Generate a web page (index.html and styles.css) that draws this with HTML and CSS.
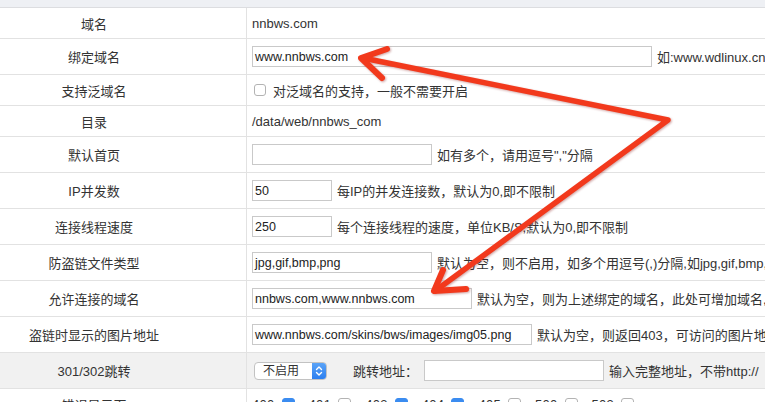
FILE: index.html
```html
<!DOCTYPE html>
<html lang="zh">
<head>
<meta charset="utf-8">
<title>站点设置</title>
<link rel="stylesheet" href="styles.css">
</head>
<body>
<div class="page">
  <div class="head"></div>
  <div class="form">
    <div class="row h30"><div class="lab">域名</div><div class="val">nnbws.com</div></div>
    <div class="row"><div class="lab">绑定域名</div><div class="val"><span class="inp w400">www.nnbws.com</span><span class="tip">如:www.wdlinux.cn,wdlinux.cn</span></div></div>
    <div class="row h30"><div class="lab">支持泛域名</div><div class="val"><span class="cb"></span><span class="tip2">对泛域名的支持，一般不需要开启</span></div></div>
    <div class="row h30"><div class="lab">目录</div><div class="val">/data/web/nnbws_com</div></div>
    <div class="row"><div class="lab">默认首页</div><div class="val"><span class="inp w180"></span><span class="tip">如有多个，请用逗号","分隔</span></div></div>
    <div class="row"><div class="lab">IP并发数</div><div class="val"><span class="inp w80">50</span><span class="tip">每IP的并发连接数，默认为0,即不限制</span></div></div>
    <div class="row"><div class="lab">连接线程速度</div><div class="val"><span class="inp w80">250</span><span class="tip">每个连接线程的速度，单位KB/S,默认为0,即不限制</span></div></div>
    <div class="row"><div class="lab">防盗链文件类型</div><div class="val"><span class="inp w180">jpg,gif,bmp,png</span><span class="tip">默认为空，则不启用，如多个用逗号(,)分隔,如jpg,gif,bmp,png</span></div></div>
    <div class="row"><div class="lab">允许连接的域名</div><div class="val"><span class="inp w220">nnbws.com,www.nnbws.com</span><span class="tip">默认为空，则为上述绑定的域名，此处可增加域名,多个用逗号分隔</span></div></div>
    <div class="row"><div class="lab">盗链时显示的图片地址</div><div class="val"><span class="inp w280">www.nnbws.com/skins/bws/images/img05.png</span><span class="tip">默认为空，则返回403，可访问的图片地址</span></div></div>
    <div class="row grey"><div class="lab">301/302跳转</div><div class="val"><span class="sel"><span class="sel-t">不启用</span><span class="sel-b"><svg width="8" height="12" viewBox="0 0 8 12"><path d="M1.5 4.5 L4 2 L6.5 4.5 M1.5 7.5 L4 10 L6.5 7.5" fill="none" stroke="#fff" stroke-width="1.4" stroke-linecap="round" stroke-linejoin="round"/></svg></span></span><span class="jlab">跳转地址：</span><span class="inp w180"></span><span class="tip">输入完整地址，不带http://</span></div></div>
    <div class="row h30"><div class="lab">错误显示页</div><div class="val errs">
      <span>400</span><span class="cb on"></span>
      <span>401</span><span class="cb"></span>
      <span>403</span><span class="cb on"></span>
      <span>404</span><span class="cb on"></span>
      <span>405</span><span class="cb"></span>
      <span>500</span><span class="cb"></span>
      <span>503</span><span class="cb"></span>
    </div></div>
  </div>
  <svg class="arrows" width="765" height="402" viewBox="0 0 765 402">
    <g fill="none" stroke="#f2391c" stroke-linecap="round" stroke-linejoin="round">
      <polyline points="363,58 668,120 435,291" stroke-width="5.5"/>
      <polyline points="387,49 361,58 382,78" stroke-width="6"/>
      <polyline points="443,270 434,291 466,289" stroke-width="6"/>
    </g>
  </svg>
</div>
</body>
</html>
```
FILE: styles.css
```css
html, body {
  margin: 0;
  padding: 0;
  overflow: hidden;
  background: #fff;
}
.page {
  position: relative;
  width: 765px;
  height: 402px;
  overflow: hidden;
  font-family: "Liberation Sans", "Noto Sans CJK SC", sans-serif;
  font-size: 13px;
  color: #333;
}
.head {
  height: 7px;
  background: #eef0f4;
  border-bottom: 1px solid #dcdde0;
}
.form {
  width: 1000px;
}
.row {
  display: flex;
  height: 35px;
  border-bottom: 1px solid #e2e2e2;
}
.row.h30 {
  height: 30px;
}
.row.grey {
  background: #f1f1f1;
}
.lab {
  width: 188px;
  padding-right: 58px;
  border-right: 1px solid #e2e2e2;
  display: flex;
  align-items: center;
  justify-content: center;
  white-space: nowrap;
}
.val {
  flex: 1;
  display: flex;
  align-items: center;
  padding-left: 5px;
  white-space: nowrap;
}
.inp {
  box-sizing: border-box;
  height: 21px;
  border: 1px solid #c9c9c9;
  background: #fff;
  padding: 0 2px;
  display: flex;
  align-items: center;
  font-size: 12.5px;
  color: #222;
  overflow: hidden;
  white-space: nowrap;
}
.w400 { width: 400px; }
.w180 { width: 180px; }
.w80 { width: 80px; }
.w220 { width: 220px; }
.w280 { width: 280px; }
.tip {
  margin-left: 5px;
}
.tip2 {
  margin-left: 7px;
}
.cb {
  box-sizing: border-box;
  width: 12px;
  height: 12px;
  border: 1px solid #b3b3b3;
  border-radius: 3px;
  background: #fff;
  margin-left: 2px;
}
.cb.on {
  background: #3b8cf0;
  border-color: #3b8cf0;
}
.sel {
  box-sizing: border-box;
  margin-left: 2px;
  width: 73px;
  height: 18px;
  border: 1px solid #c2c2c2;
  border-radius: 4px;
  background: #fff;
  display: flex;
  overflow: hidden;
}
.sel-t {
  flex: 1;
  padding-left: 8px;
  font-size: 12px;
  line-height: 16px;
}
.sel-b {
  width: 14px;
  background: linear-gradient(#5aa3f7, #2c7ff0);
  display: flex;
  align-items: center;
  justify-content: center;
}
.jlab {
  margin-left: 26px;
  margin-right: 6px;
}
.errs span:not(.cb) {
  letter-spacing: 0.3px;
}
.errs .cb {
  width: 13px;
  height: 13px;
  margin: 0 14px 0 7px;
}
.arrows {
  position: absolute;
  left: 0;
  top: 0;
  pointer-events: none;
  filter: drop-shadow(1px 1px 1px rgba(120, 0, 0, 0.35));
}
```
